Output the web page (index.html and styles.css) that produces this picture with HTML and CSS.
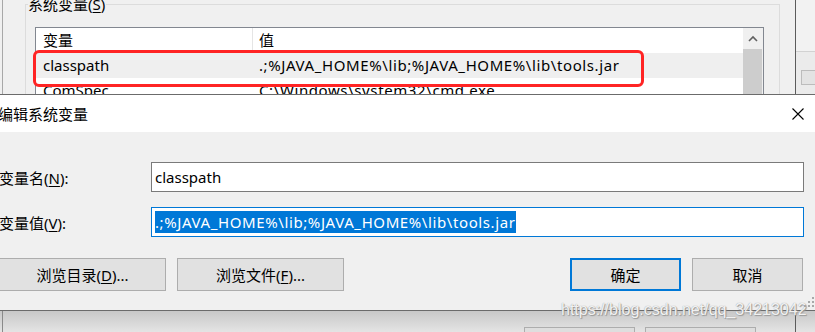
FILE: index.html
```html
<!DOCTYPE html>
<html lang="zh-CN">
<head>
<meta charset="utf-8">
<title>编辑系统变量</title>
<link rel="stylesheet" href="styles.css">
</head>
<body>
<div class="screen">
  <div class="bg-top">
    <div class="bg-win">
      <div class="groupbox">
        <div class="gb-label">系统变量(<u>S</u>)</div>
        <div class="listbox">
          <div class="list-main">
            <div class="row head"><div class="c1">变量</div><div class="c2">值</div></div>
            <div class="row sel"><div class="c1">classpath</div><div class="c2 path">.;%JAVA_HOME%\lib;%JAVA_HOME%\lib\tools.jar</div></div>
            <div class="row"><div class="c1">ComSpec</div><div class="c2 path">C:\Windows\system32\cmd.exe</div></div>
          </div>
          <div class="scrollbar">
            <div class="sb-up">
              <svg width="10" height="7" viewBox="0 0 10 7"><path d="M1 6 L5 2 L9 6" fill="none" stroke="#606060" stroke-width="1.6"/></svg>
            </div>
            <div class="sb-thumb"></div>
          </div>
        </div>
      </div>
    </div>
    <div class="other-win">
      <div class="ow-top"></div>
      <div class="ow-bottom"><div class="ow-box"></div></div>
    </div>
  </div>

  <div class="dialog">
    <div class="titlebar">
      <div class="title">编辑系统变量</div>
      <div class="close">
        <svg width="12" height="12" viewBox="0 0 12 12"><path d="M0.5 0.5 L11.5 11.5 M11.5 0.5 L0.5 11.5" stroke="#000" stroke-width="1.1"/></svg>
      </div>
    </div>
    <div class="dbody">
      <div class="fields">
        <div class="label">变量名(<u>N</u>):</div>
        <div class="input">classpath</div>
        <div class="label">变量值(<u>V</u>):</div>
        <div class="input focus"><span class="hl path">.;%JAVA_HOME%\lib;%JAVA_HOME%\lib\tools.jar</span></div>
      </div>
      <div class="buttons">
        <div class="btn">浏览目录(<u>D</u>)...</div>
        <div class="btn">浏览文件(<u>F</u>)...</div>
        <div class="spacer"></div>
        <div class="btn small default">确定</div>
        <div class="btn small cancel">取消</div>
      </div>
    </div>
  </div>

  <div class="bg-bottom">
    <div class="bb-win">
      <div class="bb-btn"></div>
      <div class="bb-btn"></div>
    </div>
    <div class="bb-other"></div>
  </div>

  <div class="annot"></div>
  <div class="watermark">https://blog.csdn.net/qq_34213042</div>
  <svg class="grip" width="10" height="10" viewBox="0 0 10 10">
    <rect x="8" y="0" width="2" height="2" fill="#a8a8a8"/>
    <rect x="4" y="4" width="2" height="2" fill="#a8a8a8"/>
    <rect x="8" y="4" width="2" height="2" fill="#a8a8a8"/>
    <rect x="0" y="8" width="2" height="2" fill="#a8a8a8"/>
    <rect x="4" y="8" width="2" height="2" fill="#a8a8a8"/>
    <rect x="8" y="8" width="2" height="2" fill="#a8a8a8"/>
  </svg>
</div>
</body>
</html>
```

FILE: styles.css
```css
body {
  margin: 0;
}

.screen {
  width: 815px;
  height: 332px;
  overflow: hidden;
  position: relative;
  background: #f0f0f0;
  font-family: "Noto Sans", "Noto Sans CJK SC", sans-serif;
  font-size: 15px;
  color: #000;
}

u {
  text-decoration: underline;
  text-underline-offset: 2px;
}

.path {
  letter-spacing: 0.6px;
}

/* background window (top) */
.bg-top {
  height: 94px;
  display: flex;
  overflow: hidden;
}

.bg-win {
  margin-left: 2px;
  width: 792px;
  flex: 0 0 792px;
  border-left: 1px solid #a8a8a8;
  border-right: 1px solid #5c5c5c;
}

.groupbox {
  margin: 4px 0 0 22px;
  width: 753px;
  height: 120px;
  border: 1px solid #dcdcdc;
  border-bottom: none;
}

.gb-label {
  width: fit-content;
  margin: -10px 0 0 2px;
  height: 18px;
  line-height: 18px;
  padding-right: 1px;
  background: #f0f0f0;
}

.listbox {
  margin: 14px 0 0 9px;
  width: 727px;
  height: 100px;
  border: 1px solid #828790;
  display: flex;
  background: #fff;
}

.list-main {
  flex: 1;
}

.row {
  display: flex;
  height: 25px;
  line-height: 25px;
  white-space: nowrap;
}

.c1 {
  width: 217px;
  box-sizing: border-box;
  padding-left: 7px;
}

.head .c1 {
  border-right: 1px solid #e5e5e5;
}

.c2 {
  padding-left: 6px;
}

.sel {
  background: #efefef;
}

.scrollbar {
  width: 20px;
  background: #f0f0f0;
  display: flex;
  flex-direction: column;
}

.sb-up {
  height: 21px;
  display: flex;
  align-items: center;
  justify-content: center;
}

.sb-thumb {
  flex: 1;
  margin: 0 1px 0 0;
  background: #cdcdcd;
}

.other-win {
  flex: 1;
  display: flex;
  flex-direction: column;
}

.ow-top {
  height: 51px;
  background: #f2f2f2;
  border-bottom: 1px solid #d2d2d2;
}

.ow-bottom {
  flex: 1;
  background: #ebebeb;
  padding: 18px 0 0 5px;
}

.ow-box {
  height: 13px;
  border: 1px solid #bcbcbc;
  border-right: none;
  background: #e3e3e3;
}

/* dialog */
.dialog {
  width: 831px;
  margin-left: -10px;
  border-top: 1px solid #6b6b6b;
  border-bottom: 1px solid #6b6b6b;
}

.titlebar {
  height: 37px;
  background: #fff;
  display: flex;
  align-items: center;
}

.title {
  flex: 1;
  padding-left: 8px;
}

.close {
  width: 46px;
  height: 37px;
  display: flex;
  align-items: center;
  justify-content: center;
}

.dbody {
  height: 178px;
  box-sizing: border-box;
  padding: 30px 17px 0 9px;
  background: #f0f0f0;
}

.fields {
  display: grid;
  grid-template-columns: 152px 1fr;
  row-gap: 15px;
  align-items: center;
}

.label {
  white-space: nowrap;
}

.input {
  height: 30px;
  box-sizing: border-box;
  border: 1px solid #7a7a7a;
  background: #fff;
  padding: 0 3px;
  display: flex;
  align-items: center;
  white-space: nowrap;
}

.input.focus {
  border-color: #0078d7;
}

.hl {
  background: #0078d7;
  color: #fff;
  line-height: 22px;
}

.buttons {
  display: flex;
  gap: 11px;
  margin-top: 21px;
}

.btn {
  width: 167px;
  height: 33px;
  box-sizing: border-box;
  border: 1px solid #adadad;
  background: #e1e1e1;
  display: flex;
  align-items: center;
  justify-content: center;
  white-space: nowrap;
}

.btn.small {
  width: 111px;
}

.btn.default {
  border: 2px solid #0078d7;
}

.btn.cancel {
  margin-right: 1px;
}

.spacer {
  flex: 1;
}

/* background window (bottom, under dialog shadow) */
.bg-bottom {
  height: 21px;
  display: flex;
  background: linear-gradient(#c8c8c8, #e4e4e4);
}

.bb-win {
  margin-left: 2px;
  width: 794px;
  box-sizing: border-box;
  border-left: 1px solid #8a8a8a;
  border-right: 1px solid #5c5c5c;
  display: flex;
  gap: 10px;
  padding: 16px 0 0 521px;
}

.bb-btn {
  width: 111px;
  height: 5px;
  box-sizing: border-box;
  border: 1px solid #adadad;
  border-bottom: none;
  background: #dedede;
}

.bb-other {
  flex: 1;
}

/* overlays */
.annot {
  position: absolute;
  left: 33px;
  top: 50px;
  width: 611px;
  height: 37px;
  box-sizing: border-box;
  border: 3px solid #ff2424;
  border-radius: 6px;
}

.watermark {
  position: absolute;
  left: 561px;
  top: 301px;
  font-family: "Liberation Sans", Arial, sans-serif;
  font-size: 16px;
  line-height: 18px;
  color: rgba(255, 255, 255, 0.9);
  text-shadow: 0 0 1px #8a8a8a, 1px 1px 1px #9a9a9a;
  white-space: nowrap;
}

.grip {
  position: absolute;
  left: 804px;
  top: 297px;
}
```
